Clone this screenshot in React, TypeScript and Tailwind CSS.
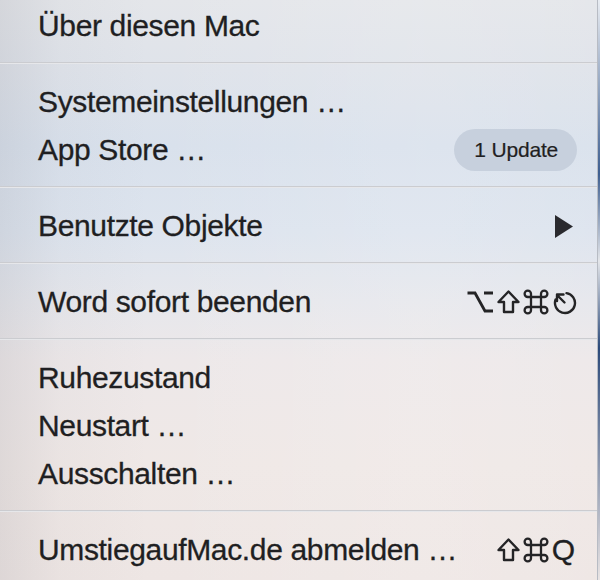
import React from "react";

const font = { fontFamily: '"Liberation Sans", Arial, sans-serif' };

function Row({ children, right }: { children: React.ReactNode; right?: React.ReactNode }) {
  return (
    <div className="flex h-[48px] items-center justify-between pl-[38px] pr-[20px]">
      <span className="text-[30px] leading-[48px] text-[#1f1f22] tracking-[-0.35px] [-webkit-text-stroke:0.3px_#1f1f22]">{children}</span>
      {right}
    </div>
  );
}

function Sep() {
  return <div className="mt-[12px] mb-[14px] h-[2px] w-full bg-[#cbccd0] border-b border-[#e6e7ea]" />;
}

const S = { fill: "none", stroke: "#242426", strokeWidth: 2.4, strokeLinejoin: "round" as const, strokeLinecap: "round" as const };

function OptIcon() {
  return (
    <svg width="28" height="26" viewBox="0 0 28 26">
      <path d="M1.5 4 H9 L19 22 H27 M18 4 H27" {...S} strokeWidth={2.8} strokeLinecap="butt" strokeLinejoin="miter" />
    </svg>
  );
}

function ShiftIcon() {
  return (
    <svg width="23" height="26" viewBox="0 0 23 26">
      <path d="M11.5 2.5 L21.5 13 H16 V23 H7 V13 H1.5 Z" {...S} />
    </svg>
  );
}

function CmdIcon() {
  const a = 8, b = 18, c = 8, d = 18, r = 3.2;
  const p = `M${a} ${c - r} A${r} ${r} 0 1 0 ${a - r} ${c} H${b + r} A${r} ${r} 0 1 0 ${b} ${c - r} V${d + r} A${r} ${r} 0 1 0 ${b + r} ${d} H${a - r} A${r} ${r} 0 1 0 ${a} ${d + r} Z`;
  return (
    <svg width="26" height="26" viewBox="0 0 26 26">
      <path d={p} {...S} strokeWidth={2.3} />
    </svg>
  );
}

function EscIcon() {
  return (
    <svg width="26" height="26" viewBox="0 0 26 26">
      <path d="M14.5 4.1 A10 10 0 1 1 3.6 10.5" {...S} />
      <path d="M12.5 13.5 L5 6 M5 12 V5.5 H11.5" {...S} />
    </svg>
  );
}

export default function App() {
  return (
    <div className="flex h-[580px] w-[600px] overflow-hidden" style={font}>
      <div className="relative h-full w-[597px] bg-[linear-gradient(180deg,#e4e6ea_0%,#dfe3ea_12%,#d9e1ec_25%,#dde4ee_40%,#e6e7ec_52%,#ede8e9_62%,#efe8e6_80%,#eee6e4_100%)]">
        <div className="pointer-events-none absolute inset-0 bg-[linear-gradient(90deg,rgba(120,120,130,0.14)_0%,rgba(120,120,130,0.04)_10%,rgba(255,255,255,0)_25%,rgba(255,255,255,0.12)_70%,rgba(255,255,255,0.05)_100%)]" />
        <div className="relative flex flex-col pt-[2px]">
          <Row>Über diesen Mac</Row>
          <Sep />
          <Row>Systemeinstellungen …</Row>
          <Row
            right={
              <span className="flex h-[42px] items-center rounded-full bg-[#c7d0dd] pl-[20px] pr-[19px] text-[21px] tracking-[-0.2px] text-[#1f1f22] [-webkit-text-stroke:0.2px_#1f1f22]">
                1 Update
              </span>
            }
          >
            App Store …
          </Row>
          <Sep />
          <Row
            right={
              <svg width="18" height="23" viewBox="0 0 18 23" className="mr-[4px]">
                <polygon points="0,0 18,11.5 0,23" fill="#2a2a2e" />
              </svg>
            }
          >
            Benutzte Objekte
          </Row>
          <Sep />
          <Row
            right={
              <span className="mr-[-1px] flex items-center gap-[3px]">
                <OptIcon />
                <ShiftIcon />
                <CmdIcon />
                <EscIcon />
              </span>
            }
          >
            Word sofort beenden
          </Row>
          <Sep />
          <Row>Ruhezustand</Row>
          <Row>Neustart …</Row>
          <Row>Ausschalten …</Row>
          <Sep />
          <Row
            right={
              <span className="mr-[2px] flex items-center gap-[3px] text-[#1f1f22]">
                <ShiftIcon />
                <CmdIcon />
                <span className="text-[30px] leading-none [-webkit-text-stroke:0.3px_#1f1f22]">Q</span>
              </span>
            }
          >
            UmstiegaufMac.de abmelden …
          </Row>
        </div>
      </div>
      <div className="h-full w-[3px] border-l border-[#b8bcc4] bg-[linear-gradient(180deg,#e8ecf2_0%,#3f5f90_30%,#e4e6ea_45%,#2c4a7a_60%,#e9e4e4_100%)]" />
    </div>
  );
}
